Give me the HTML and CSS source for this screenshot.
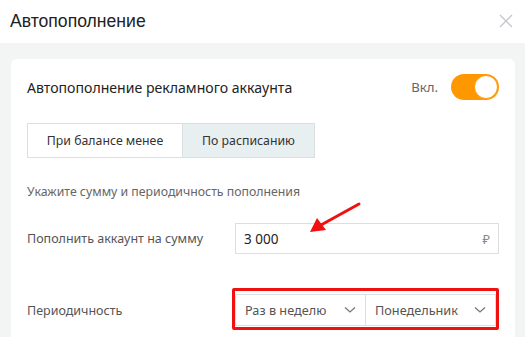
FILE: index.html
```html
<!DOCTYPE html>
<html lang="ru">
<head>
    <meta charset="UTF-8">
    <meta name="viewport" content="width=device-width, initial-scale=1.0">
    <title>Автопополнение</title>
    <link rel="stylesheet" href="styles.css">
</head>
<body>
    <div class="modal">
        <div class="modal-header">
            <h2>Автопополнение</h2>
            <svg class="close" width="14" height="14" viewBox="0 0 14 14">
                <path d="M1 1L13 13M13 1L1 13" stroke="#c4c7cc" stroke-width="1.3" fill="none"/>
            </svg>
        </div>

        <div class="modal-body">
            <div class="card">
                <div class="card-head">
                    <span class="card-title">Автопополнение рекламного аккаунта</span>
                    <div class="switch-wrap">
                        <span class="switch-label">Вкл.</span>
                        <span class="switch"><span class="knob"></span></span>
                    </div>
                </div>

                <div class="tabs">
                    <div class="tab">При балансе менее</div>
                    <div class="tab active">По расписанию</div>
                </div>

                <p class="hint">Укажите сумму и периодичность пополнения</p>

                <div class="field">
                    <span class="field-label">Пополнить аккаунт на сумму</span>
                    <div class="input">
                        <span>3 000</span>
                        <span class="currency">₽</span>
                    </div>
                </div>

                <div class="field period">
                    <span class="field-label">Периодичность</span>
                    <div class="selects">
                        <div class="select">
                            <span>Раз в неделю</span>
                            <svg width="12" height="8" viewBox="0 0 12 8"><path d="M1 1.5L6 6L11 1.5" stroke="#777" stroke-width="1.3" fill="none"/></svg>
                        </div>
                        <div class="select">
                            <span>Понедельник</span>
                            <svg width="12" height="8" viewBox="0 0 12 8"><path d="M1 1.5L6 6L11 1.5" stroke="#777" stroke-width="1.3" fill="none"/></svg>
                        </div>
                    </div>
                </div>

                <!-- annotation arrow -->
                <svg class="arrow" width="56" height="34" viewBox="0 0 56 34">
                    <path d="M52 3L14 24" stroke="#f01010" stroke-width="3" fill="none" stroke-linecap="round"/>
                    <path d="M3 31L10 17L19 29Z" fill="#f01010"/>
                </svg>
            </div>
        </div>
    </div>
</body>
</html>
```

FILE: styles.css
```css
body {
    margin: 0;
    font-family: 'Noto Sans', sans-serif;
    background: #f3f4f4;
    color: #333;
}

.modal {
    width: 525px;
    height: 337px;
    overflow: hidden;
}

.modal-header {
    height: 43px;
    background: #fff;
    display: flex;
    align-items: center;
    justify-content: space-between;
    padding: 0 12px 0 10px;
}

.modal-header h2 {
    margin: 0;
    font-family: 'Liberation Sans', Arial, sans-serif;
    font-size: 17.6px;
    font-weight: normal;
    color: #222;
}

.close {
    margin-top: -2px;
}

.modal-body {
    padding: 16px 10px 0 11px;
}

.card {
    position: relative;
    background: #fff;
    border-radius: 6px 6px 0 0;
    padding: 15px 16px 20px 16px;
    height: 300px;
    box-sizing: border-box;
}

.card-head {
    display: flex;
    align-items: center;
    justify-content: space-between;
    height: 26px;
}

.card-title {
    font-size: 14.1px;
    color: #222;
}

.switch-wrap {
    display: flex;
    align-items: center;
    gap: 13px;
}

.switch-label {
    font-size: 13.2px;
    color: #666;
}

.switch {
    width: 48px;
    height: 26px;
    border-radius: 13px;
    background: #ff9800;
    display: flex;
    align-items: center;
    justify-content: flex-end;
    padding: 0 1px;
    box-sizing: border-box;
}

.knob {
    width: 22px;
    height: 22px;
    border-radius: 50%;
    background: #fff;
    border: 1px solid #ff9800;
}

.tabs {
    display: flex;
    margin-top: 23px;
    height: 35px;
}

.tab {
    display: flex;
    align-items: center;
    justify-content: center;
    border: 1px solid #dcdfe1;
    font-size: 12.3px;
    color: #333;
    width: 156px;
    box-sizing: border-box;
}

.tab.active {
    background: #e8eff1;
    border-left: none;
    width: 132px;
}

.hint {
    margin: 24px 0 0 0;
    line-height: 20px;
    font-size: 12.3px;
    color: #666;
}

.field {
    display: flex;
    align-items: center;
    margin-top: 21px;
}

.field-label {
    width: 208px;
    font-size: 12.5px;
    color: #555;
}

.input {
    flex: 1;
    height: 31px;
    border: 1px solid #dcdfe1;
    box-sizing: border-box;
    display: flex;
    align-items: center;
    justify-content: space-between;
    padding: 0 8px 0 8px;
    font-size: 13.5px;
    color: #222;
}

.currency {
    color: #888;
    font-size: 13px;
}

.field.period {
    margin-top: 34px;
}

.field.period .field-label {
    width: 205px;
    padding-top: 3px;
}

.selects {
    flex: 1;
    display: flex;
    border: 3px solid #f01010;
    border-radius: 2px;
    padding: 3px 0 1px 0;
}

.select {
    flex: 1;
    height: 32px;
    border: 1px solid #dcdfe1;
    box-sizing: border-box;
    display: flex;
    align-items: center;
    justify-content: space-between;
    padding: 0 9px 0 9px;
    font-size: 12.7px;
    color: #555;
}

.select + .select {
    border-left: none;
}

.arrow {
    position: absolute;
    left: 296px;
    top: 142px;
}
```
